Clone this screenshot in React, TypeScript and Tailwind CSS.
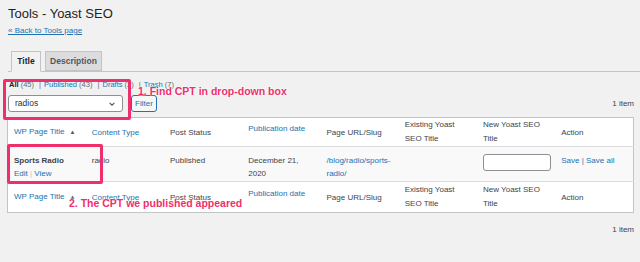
import React from 'react'

function HeaderRow({ bottom }: { bottom?: boolean }) {
  return (
    <tr className={bottom ? 'h-[31px] border-t border-[#dcdcde]' : 'h-[28px] border-b border-[#dcdcde]'}>
      <th className="px-[6px] text-left font-normal whitespace-nowrap">
        <span className="text-[#2271b1]">WP Page Title</span>
        <span className="ml-[5px] text-[6px] text-[#50575e]">▲</span>
      </th>
      <th className="px-[6px] text-left font-normal text-[#2271b1]">Content Type</th>
      <th className="px-[6px] text-left font-normal text-[#3c434a]">Post Status</th>
      <th className="px-[6px] text-left font-normal text-[#2271b1] whitespace-nowrap">
        <div className="pb-[8px]">Publication date</div>
      </th>
      <th className="px-[6px] text-left font-normal text-[#3c434a]">Page URL/Slug</th>
      <th className="px-[6px] text-left font-normal text-[#3c434a] leading-[14px]">Existing Yoast<br />SEO Title</th>
      <th className="px-[6px] text-left font-normal text-[#3c434a] leading-[14px]">New Yoast SEO<br />Title</th>
      <th className="px-[6px] text-left font-normal text-[#3c434a]">Action</th>
    </tr>
  )
}

export default function App() {
  return (
    <div className="relative w-[640px] h-[262px] overflow-hidden bg-[#f1f1f1] text-[#3c434a] font-['Liberation_Sans',Arial,sans-serif]">
      <div className="pl-2 pt-[5px]">
        <h1 className="text-[13px] leading-[18px] text-[#1d2327]">Tools - Yoast SEO</h1>
        <a className="block mt-[3px] text-[8px] leading-[10px] text-[#2271b1] underline">« Back to Tools page</a>

        {/* Tabs */}
        <div className="mt-[15px] flex gap-[4px] pl-[3px] border-b border-[#c3c4c7] h-[21px] items-end">
          <div className="h-[21px] w-[30px] flex items-center justify-center border border-[#c3c4c7] border-b-[#f1f1f1] bg-[#f1f1f1] -mb-px text-[8.5px] font-bold text-[#1d2327]">Title</div>
          <div className="h-[20px] w-[57px] flex items-center justify-center border border-[#c3c4c7] bg-[#dcdcde] text-[8.5px] font-bold text-[#50575e]">Description</div>
        </div>

        {/* Status links */}
        <div className="mt-[8px] pl-px text-[7.5px] leading-[10px] text-[#646970]">
          <span className="font-bold text-[#1d2327]">All</span> (45) <span className="mx-[3px]">|</span>
          <span className="text-[#2271b1]">Published</span> (43) <span className="mx-[3px]">|</span>
          <span className="text-[#2271b1]">Drafts</span> (2) <span className="mx-[3px]">|</span>
          <span className="text-[#2271b1]">Trash</span> (7)
        </div>

        {/* Filter row */}
        <div className="mt-[5px] flex items-center pr-[6px]">
          <div className="w-[115px] h-[17px] flex items-center justify-between px-[6px] bg-white border border-[#8c8f94] rounded-[3px] text-[8.5px] text-[#2c3338]">
            <span>radios</span>
            <svg width="8" height="8" viewBox="0 0 10 10" fill="none" stroke="#50575e" strokeWidth="1.4">
              <path d="M2 3.5l3 3 3-3" />
            </svg>
          </div>
          <div className="ml-[8px] w-[26px] h-[17px] flex items-center justify-center border border-[#2271b1] rounded-[3px] bg-[#f6f7f7] text-[8px] text-[#2271b1]">Filter</div>
          <div className="ml-auto text-[8px] text-[#3c434a]">1 item</div>
        </div>

        {/* Table */}
        <table className="mt-[5px] -ml-px w-[627px] table-fixed border border-[#c3c4c7] bg-white text-[8px] leading-[13px] border-collapse">
          <tbody>
            <HeaderRow />
            <tr className="h-[35px] bg-[#f9f9f9] align-top">
              <td className="px-[6px] pt-[7px]">
                <div className="font-bold text-[#3c434a]">Sports Radio</div>
                <div className="text-[#2271b1]">Edit <span className="text-[#c3c4c7]">|</span> View</div>
              </td>
              <td className="px-[6px] pt-[7px]">radio</td>
              <td className="px-[6px] pt-[7px]">Published</td>
              <td className="px-[6px] pt-[7px]">December 21,<br />2020</td>
              <td className="px-[6px] pt-[7px] text-[#2271b1]">/blog/radio/sports-<br />radio/</td>
              <td className="px-[6px] pt-[7px]"></td>
              <td className="px-[6px] pt-[7px]">
                <div className="w-[68px] h-[17px] bg-white border border-[#8c8f94] rounded-[3px]" />
              </td>
              <td className="px-[6px] pt-[7px] text-[#2271b1]">Save | Save all</td>
            </tr>
            <HeaderRow bottom />
          </tbody>
        </table>

        <div className="mt-[11px] pr-[6px] text-right text-[8px] text-[#3c434a]">1 item</div>
      </div>

      {/* Annotations */}
      <div className="absolute left-[3px] top-[79px] w-[128px] h-[41px] border-[3px] border-[#ee2f6c] rounded-[2px]" />
      <div className="absolute left-[138px] top-[84px] text-[10.5px] font-bold text-[#ee2f6c] [text-shadow:0_0_2px_#fff,0_0_2px_#fff]">1. Find CPT in drop-down box</div>
      <div className="absolute left-[7px] top-[144px] w-[96px] h-[40px] border-[3px] border-[#ee2f6c] rounded-[2px]" />
      <div className="absolute left-[69px] top-[196px] text-[10.5px] font-bold text-[#ee2f6c] [text-shadow:0_0_2px_#fff,0_0_2px_#fff]">2. The CPT we published appeared</div>
    </div>
  )
}
